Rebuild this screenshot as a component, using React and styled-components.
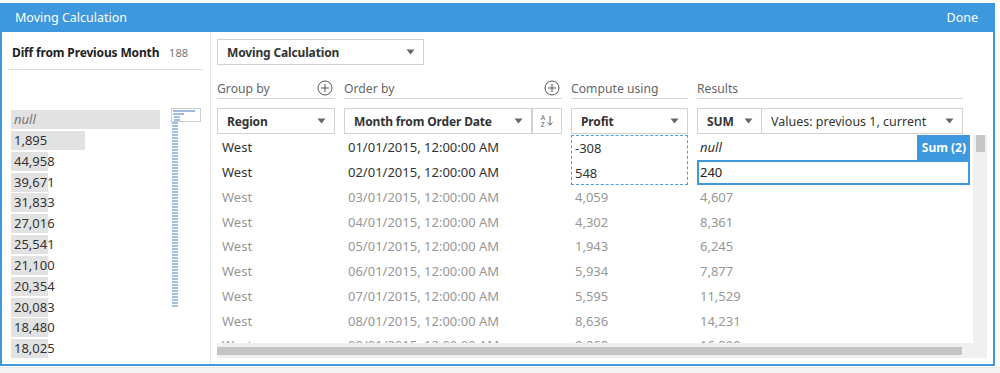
import React from 'react'
import styled, { createGlobalStyle } from 'styled-components'

const leftValues = [
    { label: 'null', width: 149, isNull: true },
    { label: '1,895', width: 74 },
    { label: '44,958', width: 37 },
    { label: '39,671', width: 37 },
    { label: '31,833', width: 37 },
    { label: '27,016', width: 37 },
    { label: '25,541', width: 37 },
    { label: '21,100', width: 37 },
    { label: '20,354', width: 37 },
    { label: '20,083', width: 37 },
    { label: '18,480', width: 37 },
    { label: '18,025', width: 37 },
]

const rows = [
    ['03', '4,059', '4,607'],
    ['04', '4,302', '8,361'],
    ['05', '1,943', '6,245'],
    ['06', '5,934', '7,877'],
    ['07', '5,595', '11,529'],
    ['08', '8,636', '14,231'],
    ['09', '9,268', '16,899'],
]

const dateText = (month) => `${month}/01/2015, 12:00:00 AM`

const Caret = () => (
    <svg width="9" height="6" viewBox="0 0 9 6"><path d="M0.5 0.5 L8.5 0.5 L4.5 5.5 Z" fill="#666" /></svg>
)

const PlusCircle = () => (
    <svg width="16" height="16" viewBox="0 0 16 16">
        <circle cx="8" cy="8" r="7" fill="none" stroke="#555" strokeWidth="1" />
        <path d="M8 4 V12 M4 8 H12" stroke="#555" strokeWidth="1" />
    </svg>
)

const App = () => {
    return (
        <Page>
            <GlobalStyle />
            <Frame>
                <Header>
                    <span>Moving Calculation</span>
                    <span>Done</span>
                </Header>
                <Body>
                    <LeftPanel>
                        <FieldTitle>
                            <strong>Diff from Previous Month</strong>
                            <Count>188</Count>
                        </FieldTitle>
                        <ListArea>
                            <ValueList>
                                {leftValues.map((v) => (
                                    <ValueRow key={v.label}>
                                        <ValueBar style={{ width: v.width }} />
                                        <ValueText $isNull={v.isNull}>{v.label}</ValueText>
                                    </ValueRow>
                                ))}
                            </ValueList>
                            <MiniMap>
                                <MiniViewport>
                                    <MiniLine $w={22} />
                                    <MiniLine $w={11} />
                                    <MiniDashes $h={6} />
                                </MiniViewport>
                                <MiniDashes $h={186} />
                            </MiniMap>
                        </ListArea>
                    </LeftPanel>
                    <RightPanel>
                        <Select $width={207}>
                            <SelectLabel>Moving Calculation</SelectLabel>
                            <Caret />
                        </Select>
                        <ColumnGrid $top={13}>
                            <Heading>Group by<PlusCircle /></Heading>
                            <Heading>Order by<PlusCircle /></Heading>
                            <Heading>Compute using</Heading>
                            <Heading $trim>Results</Heading>
                        </ColumnGrid>
                        <ColumnGrid $top={9}>
                            <Select><SelectLabel>Region</SelectLabel><Caret /></Select>
                            <SelectGroup>
                                <Select $grow><SelectLabel>Month from Order Date</SelectLabel><Caret /></Select>
                                <SortButton>
                                    <SortLetters><span>A</span><span>Z</span></SortLetters>
                                    <svg width="6" height="10" viewBox="0 0 6 10"><path d="M3 0 V9 M0.5 6.5 L3 9.2 L5.5 6.5" fill="none" stroke="#666" strokeWidth="1" /></svg>
                                </SortButton>
                            </SelectGroup>
                            <Select><SelectLabel>Profit</SelectLabel><Caret /></Select>
                            <SelectGroup $trim>
                                <Select $width={65}><SelectLabel>SUM</SelectLabel><Caret /></Select>
                                <Select $grow><SelectLabel $regular>Values: previous 1, current</SelectLabel><Caret /></Select>
                            </SelectGroup>
                        </ColumnGrid>
                        <TableArea>
                            <TableTop>
                                <DataGrid>
                                    <Cell $pad={5}>West</Cell>
                                    <Cell $pad={4}>{dateText('01')}</Cell>
                                    <SelectedSource>
                                        <Cell $pad={3}>-308</Cell>
                                        <Cell $pad={3}>548</Cell>
                                    </SelectedSource>
                                    <ResultCell>
                                        <NullText>null</NullText>
                                        <SumBadge>Sum (2)</SumBadge>
                                    </ResultCell>
                                    <Cell $pad={5}>West</Cell>
                                    <Cell $pad={4}>{dateText('02')}</Cell>
                                    <ActiveCell>240</ActiveCell>
                                    {rows.map(([m, profit, result]) => (
                                        <React.Fragment key={m}>
                                            <Cell $pad={5} $muted>West</Cell>
                                            <Cell $pad={4} $muted>{dateText(m)}</Cell>
                                            <Cell $pad={4} $muted>{profit}</Cell>
                                            <Cell $pad={3} $muted>{result}</Cell>
                                        </React.Fragment>
                                    ))}
                                </DataGrid>
                                <VScroll><VThumb /></VScroll>
                            </TableTop>
                            <HScroll><HThumb /></HScroll>
                        </TableArea>
                    </RightPanel>
                </Body>
            </Frame>
            <BottomStrip />
        </Page>
    )
}

const GlobalStyle = createGlobalStyle`
    body {
        margin: 0;
        background: #fff;
        font-family: "Noto Sans", "Liberation Sans", sans-serif;
        color: #333;
    }
`

const Page = styled.div`
    height: 373px;
    display: flex;
    flex-direction: column;
    padding-top: 3px;
    box-sizing: border-box;
    overflow: hidden;
`

const Frame = styled.div`
    width: 995px;
    height: 363px;
    box-sizing: border-box;
    border: 2px solid #3d98dd;
    border-top: none;
    display: flex;
    flex-direction: column;
    background: #fff;
`

const Header = styled.div`
    height: 29px;
    flex-shrink: 0;
    background: #3d98dd;
    color: #fff;
    font-size: 12.5px;
    display: flex;
    align-items: center;
    justify-content: space-between;
    padding: 0 15px 0 13px;
`

const Body = styled.div`
    flex: 1;
    display: flex;
    min-height: 0;
`

const LeftPanel = styled.div`
    width: 208px;
    flex-shrink: 0;
    border-right: 1px solid #e6e6e6;
`

const FieldTitle = styled.div`
    margin: 0 7px 0 6px;
    height: 38px;
    box-sizing: border-box;
    border-bottom: 1px solid #dcdcdc;
    display: flex;
    align-items: center;
    justify-content: space-between;
    padding: 4px 15px 0 4px;
    font-size: 12px;
    letter-spacing: -0.15px;
    color: #222;
    white-space: nowrap;
`

const Count = styled.span`
    font-size: 11px;
    letter-spacing: 0;
    color: #777;
`

const ListArea = styled.div`
    display: flex;
    gap: 11px;
    padding: 38px 0 0 9px;
`

const ValueList = styled.div`
    width: 149px;
    padding-top: 2px;
`

const ValueRow = styled.div`
    display: grid;
    height: 20.85px;
    align-items: start;
`

const ValueBar = styled.div`
    grid-area: 1 / 1;
    height: 19px;
    background: #e2e2e2;
`

const ValueText = styled.span`
    grid-area: 1 / 1;
    height: 19px;
    line-height: 19px;
    padding-left: 3px;
    font-size: 13px;
    color: ${(p) => (p.$isNull ? '#777' : '#333')};
    font-style: ${(p) => (p.$isNull ? 'italic' : 'normal')};
`

const MiniMap = styled.div`
    width: 30px;
    display: flex;
    flex-direction: column;
`

const MiniViewport = styled.div`
    height: 14px;
    box-sizing: border-box;
    border: 1px solid #cfcfcf;
    padding: 1px 0 0 1px;
    display: flex;
    flex-direction: column;
    gap: 1px;
`

const MiniLine = styled.div`
    width: ${(p) => p.$w}px;
    height: 2px;
    background: #9fbbdd;
`

const MiniDashes = styled.div`
    width: 6px;
    height: ${(p) => p.$h}px;
    margin-left: 1px;
    background: repeating-linear-gradient(to bottom, #a3bfdf 0 2px, transparent 2px 3px);
`

const RightPanel = styled.div`
    flex: 1;
    padding: 7px 0 0 6px;
    display: flex;
    flex-direction: column;
    min-width: 0;
`

const ColumnGrid = styled.div`
    display: grid;
    grid-template-columns: 118px 218px 117px 273px;
    column-gap: 9px;
    margin-top: ${(p) => p.$top}px;
`

const Heading = styled.div`
    height: 20px;
    border-bottom: 1px solid #d6d6d6;
    display: flex;
    align-items: center;
    justify-content: space-between;
    padding-right: 2px;
    font-size: 12.2px;
    color: #666;
    margin-right: ${(p) => (p.$trim ? '7px' : '0')};
`

const Select = styled.div`
    height: 26px;
    box-sizing: border-box;
    border: 1px solid #d2d2d2;
    background: #fff;
    display: flex;
    align-items: center;
    justify-content: space-between;
    padding: 0 8px 0 9px;
    ${(p) => (p.$width ? `width: ${p.$width}px; flex-shrink: 0;` : '')}
    ${(p) => (p.$grow ? 'flex: 1;' : '')}
`

const SelectLabel = styled.span`
    font-size: ${(p) => (p.$regular ? '12.5px' : '12px')};
    font-weight: ${(p) => (p.$regular ? 400 : 700)};
    letter-spacing: ${(p) => (p.$regular ? '0' : '-0.15px')};
    color: #333;
    white-space: nowrap;
`

const SelectGroup = styled.div`
    display: flex;
    margin-right: ${(p) => (p.$trim ? '7px' : '0')};
    & > * + * { border-left: none; }
`

const SortButton = styled.div`
    width: 30px;
    height: 26px;
    box-sizing: border-box;
    border: 1px solid #d2d2d2;
    display: flex;
    align-items: center;
    justify-content: center;
    gap: 2px;
`

const SortLetters = styled.div`
    display: flex;
    flex-direction: column;
    font-size: 7px;
    line-height: 7px;
    color: #666;
`

const TableArea = styled.div`
    margin-top: 1px;
    width: 770px;
`

const TableTop = styled.div`
    display: flex;
    gap: 3px;
    height: 208px;
    overflow: hidden;
`

const DataGrid = styled.div`
    width: 753px;
    display: grid;
    grid-template-columns: 118px 218px 117px 273px;
    grid-auto-rows: 24.75px;
    column-gap: 9px;
    align-content: start;
`

const Cell = styled.div`
    display: flex;
    align-items: center;
    height: 24.75px;
    padding-left: ${(p) => p.$pad}px;
    font-size: 13px;
    color: ${(p) => (p.$muted ? '#979797' : '#333')};
    white-space: nowrap;
`

const SelectedSource = styled.div`
    grid-row: span 2;
    border: 1px dashed #4a9fe0;
`

const ResultCell = styled.div`
    display: flex;
    align-items: stretch;
    justify-content: space-between;
    padding-left: 3px;
`

const NullText = styled.span`
    display: flex;
    align-items: center;
    font-size: 13px;
    font-style: italic;
    color: #333;
`

const SumBadge = styled.span`
    background: #3d98dd;
    color: #fff;
    font-size: 12px;
    font-weight: 700;
    display: flex;
    align-items: center;
    padding: 0 4px 0 5px;
`

const ActiveCell = styled.div`
    box-sizing: border-box;
    border: 2px solid #3d98dd;
    display: flex;
    align-items: center;
    padding-left: 1px;
    font-size: 13px;
    color: #222;
`

const VScroll = styled.div`
    width: 14px;
    background: #f0f0f0;
    padding: 0 2px 0 3px;
    box-sizing: border-box;
`

const VThumb = styled.div`
    height: 17px;
    background: #c6c6c6;
`

const HScroll = styled.div`
    height: 15px;
    background: #f0f0f0;
    padding-top: 4px;
    box-sizing: border-box;
`

const HThumb = styled.div`
    width: 745px;
    height: 8px;
    background: #c4c4c4;
`

const BottomStrip = styled.div`
    flex: 1;
    background: #f3f3f3;
    border-top: 1px solid #e8e8e8;
    margin-top: 1px;
`

export default App
